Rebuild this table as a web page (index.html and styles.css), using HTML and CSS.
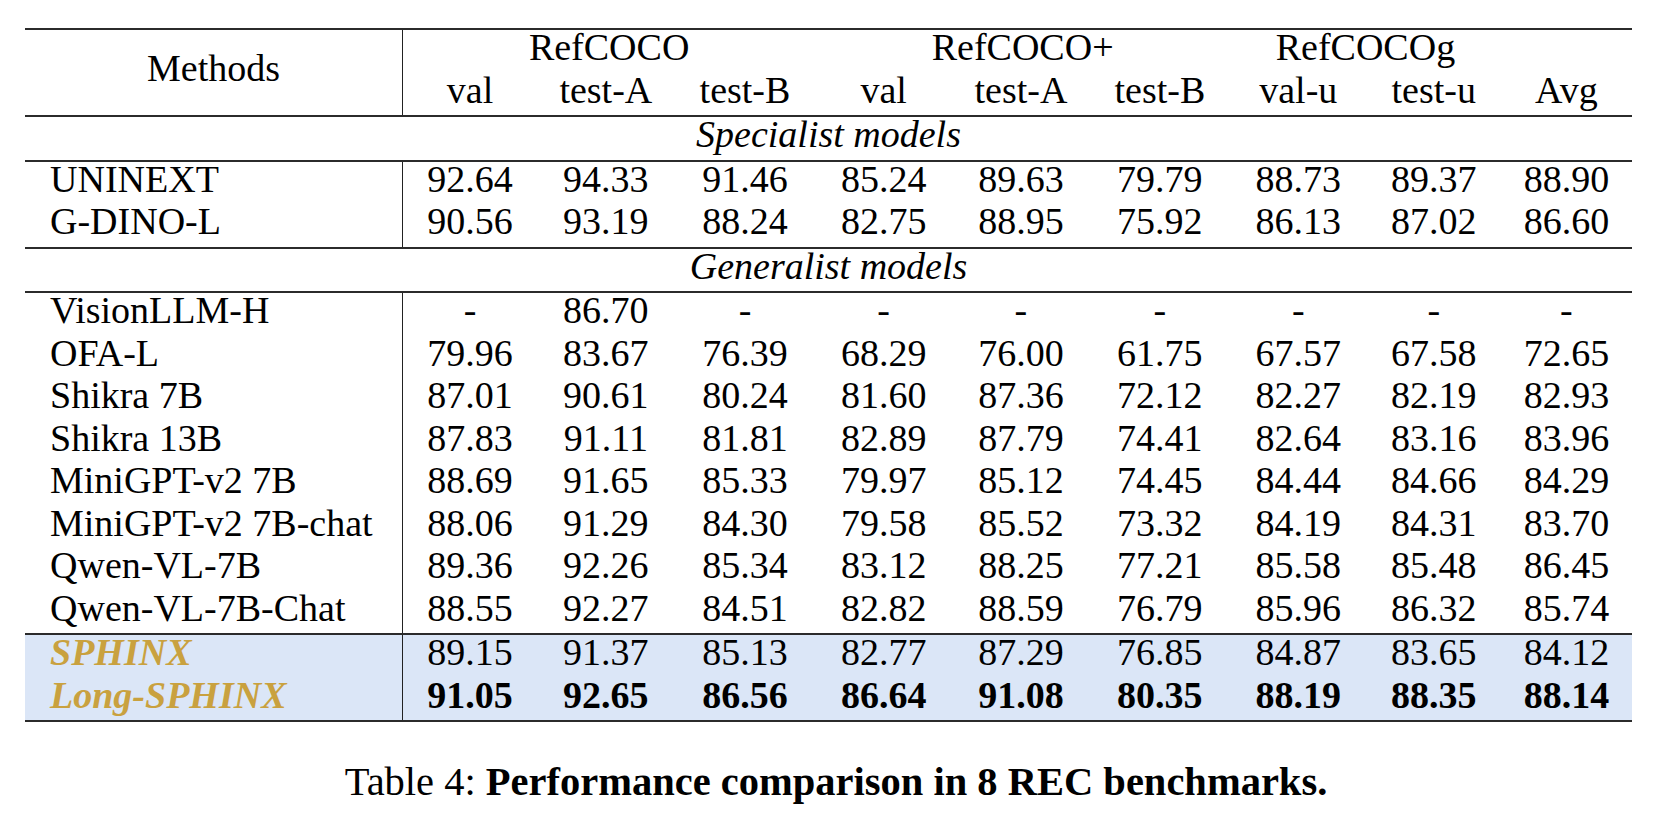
FILE: index.html
```html
<!DOCTYPE html>
<html lang="en">
<head>
<meta charset="utf-8">
<title>Table 4</title>
<link rel="stylesheet" href="styles.css">
</head>
<body>
<div class="page">
  <div class="table">
    <div class="group head">
      <div class="hgrid">
        <div class="methods-h">Methods</div>
        <div class="cell span-a">RefCOCO</div>
        <div class="cell span-b">RefCOCO+</div>
        <div class="cell span-c">RefCOCOg</div>
        <div class="cell blank"></div>
        <div class="cell">val</div>
        <div class="cell">test-A</div>
        <div class="cell">test-B</div>
        <div class="cell">val</div>
        <div class="cell">test-A</div>
        <div class="cell">test-B</div>
        <div class="cell">val-u</div>
        <div class="cell">test-u</div>
        <div class="cell">Avg</div>
      </div>
    </div>

    <div class="group label"><div class="label-text">Specialist models</div></div>

    <div class="group">
      <div class="row"><div class="name">UNINEXT</div><div class="cell">92.64</div><div class="cell">94.33</div><div class="cell">91.46</div><div class="cell">85.24</div><div class="cell">89.63</div><div class="cell">79.79</div><div class="cell">88.73</div><div class="cell">89.37</div><div class="cell">88.90</div></div>
      <div class="row"><div class="name">G-DINO-L</div><div class="cell">90.56</div><div class="cell">93.19</div><div class="cell">88.24</div><div class="cell">82.75</div><div class="cell">88.95</div><div class="cell">75.92</div><div class="cell">86.13</div><div class="cell">87.02</div><div class="cell">86.60</div></div>
    </div>

    <div class="group label"><div class="label-text">Generalist models</div></div>

    <div class="group">
      <div class="row"><div class="name">VisionLLM-H</div><div class="cell">-</div><div class="cell">86.70</div><div class="cell">-</div><div class="cell">-</div><div class="cell">-</div><div class="cell">-</div><div class="cell">-</div><div class="cell">-</div><div class="cell">-</div></div>
      <div class="row"><div class="name">OFA-L</div><div class="cell">79.96</div><div class="cell">83.67</div><div class="cell">76.39</div><div class="cell">68.29</div><div class="cell">76.00</div><div class="cell">61.75</div><div class="cell">67.57</div><div class="cell">67.58</div><div class="cell">72.65</div></div>
      <div class="row"><div class="name">Shikra 7B</div><div class="cell">87.01</div><div class="cell">90.61</div><div class="cell">80.24</div><div class="cell">81.60</div><div class="cell">87.36</div><div class="cell">72.12</div><div class="cell">82.27</div><div class="cell">82.19</div><div class="cell">82.93</div></div>
      <div class="row"><div class="name">Shikra 13B</div><div class="cell">87.83</div><div class="cell">91.11</div><div class="cell">81.81</div><div class="cell">82.89</div><div class="cell">87.79</div><div class="cell">74.41</div><div class="cell">82.64</div><div class="cell">83.16</div><div class="cell">83.96</div></div>
      <div class="row"><div class="name">MiniGPT-v2 7B</div><div class="cell">88.69</div><div class="cell">91.65</div><div class="cell">85.33</div><div class="cell">79.97</div><div class="cell">85.12</div><div class="cell">74.45</div><div class="cell">84.44</div><div class="cell">84.66</div><div class="cell">84.29</div></div>
      <div class="row"><div class="name">MiniGPT-v2 7B-chat</div><div class="cell">88.06</div><div class="cell">91.29</div><div class="cell">84.30</div><div class="cell">79.58</div><div class="cell">85.52</div><div class="cell">73.32</div><div class="cell">84.19</div><div class="cell">84.31</div><div class="cell">83.70</div></div>
      <div class="row"><div class="name">Qwen-VL-7B</div><div class="cell">89.36</div><div class="cell">92.26</div><div class="cell">85.34</div><div class="cell">83.12</div><div class="cell">88.25</div><div class="cell">77.21</div><div class="cell">85.58</div><div class="cell">85.48</div><div class="cell">86.45</div></div>
      <div class="row"><div class="name">Qwen-VL-7B-Chat</div><div class="cell">88.55</div><div class="cell">92.27</div><div class="cell">84.51</div><div class="cell">82.82</div><div class="cell">88.59</div><div class="cell">76.79</div><div class="cell">85.96</div><div class="cell">86.32</div><div class="cell">85.74</div></div>
    </div>

    <div class="group ours last">
      <div class="row"><div class="name gold">SPHINX</div><div class="cell">89.15</div><div class="cell">91.37</div><div class="cell">85.13</div><div class="cell">82.77</div><div class="cell">87.29</div><div class="cell">76.85</div><div class="cell">84.87</div><div class="cell">83.65</div><div class="cell">84.12</div></div>
      <div class="row best"><div class="name gold">Long-SPHINX</div><div class="cell">91.05</div><div class="cell">92.65</div><div class="cell">86.56</div><div class="cell">86.64</div><div class="cell">91.08</div><div class="cell">80.35</div><div class="cell">88.19</div><div class="cell">88.35</div><div class="cell">88.14</div></div>
    </div>
  </div>

  <p class="caption">Table 4: <b>Performance comparison in 8 REC benchmarks.</b></p>
</div>
</body>
</html>
```

FILE: styles.css
```css
html, body {
  margin: 0;
  padding: 0;
  background: #ffffff;
}

.page {
  width: 1658px;
  height: 816px;
  font-family: "Liberation Serif", "Times New Roman", serif;
  color: #000;
  overflow: hidden;
}

.table {
  margin: 28px 0 0 25px;
  width: 1607px;
  font-size: 38px;
}

.group {
  border-top: 2px solid #2b2b2b;
}

.group.last {
  border-bottom: 2px solid #2b2b2b;
}

.hgrid,
.row {
  display: grid;
  grid-template-columns: 378px 134px 137.7px 140.6px 136.8px 137.65px 140.25px 136.55px 134.4px 131.05px;
}

.hgrid {
  grid-template-rows: 42.5px 42.5px;
}

.cell,
.name,
.label-text {
  line-height: 35px;
  padding-bottom: 7.5px;
  white-space: nowrap;
}

.cell {
  text-align: center;
}

.name {
  padding-left: 25px;
  border-right: 1px solid #222;
  box-sizing: border-box;
}

.methods-h {
  grid-row: 1 / span 2;
  grid-column: 1;
  display: flex;
  align-items: center;
  justify-content: center;
  line-height: 34px;
  padding-bottom: 9px;
  border-right: 1px solid #222;
  box-sizing: border-box;
}

.span-a { grid-column: 2 / span 3; }
.span-b { grid-column: 5 / span 3; }
.span-c { grid-column: 8 / span 2; }
.blank { grid-column: 10; }

.label-text {
  text-align: center;
  font-style: italic;
}

.ours {
  background: #dbe6f7;
}

.gold {
  color: #c9a13f;
  font-weight: bold;
  font-style: italic;
}

.best .cell {
  font-weight: bold;
}

.caption {
  margin: 36px 0 0 14px;
  font-size: 40.5px;
  line-height: 48px;
  text-align: center;
}

.caption b {
  font-weight: bold;
}
```
